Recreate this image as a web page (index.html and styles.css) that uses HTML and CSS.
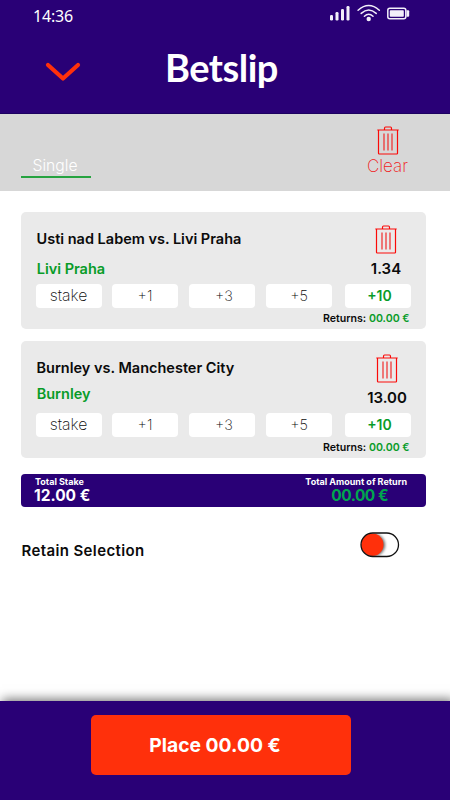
FILE: index.html
```html
<!DOCTYPE html>
<html lang="en">
<head>
<meta charset="utf-8">
<title>Betslip</title>
<link rel="stylesheet" href="styles.css">
</head>
<body>
<svg class="defs" aria-hidden="true">
  <symbol id="trash" viewBox="0 0 22 29">
    <path d="M7.500 3.500V2.500Q7.500 1 8.500 1H13.500Q14.500 1 14.500 2.500V3.500M.300 4H21.700M1.500 4V27.300Q1.500 28 2.300 28H19.700Q20.500 28 20.500 27.300V4" fill="none" stroke="#fb0a08" stroke-width="1.200"/>
    <path d="M7 7.500V24.500M11 7.500V24.500M15 7.500V24.500" fill="none" stroke="#f02a2a" stroke-width="1.200"/>
  </symbol>
</svg>
<div class="screen">
  <header class="header">
    <div class="status">
      <span class="time">14:36</span>
      <svg class="signals" viewBox="0 0 82 20" width="82" height="20">
        <g fill="#f2effa">
          <rect x="0" y="12" width="3" height="5.500" rx="1.200"/>
          <rect x="5.500" y="9" width="3" height="8.500" rx="1.200"/>
          <rect x="11" y="6" width="3" height="11.500" rx="1.200"/>
          <rect x="16.500" y="3" width="3" height="14.500" rx="1.200"/>
          <circle cx="38.700" cy="16" r="2.200"/>
          <rect x="59.800" y="7.300" width="14" height="6.400" rx=".8"/>
          <path d="M76.500 7.300h1.700q1 0 1 1v4.400q0 1-1 1h-1.700z"/>
        </g>
        <g fill="none" stroke="#f2effa" stroke-width="1.500" stroke-linecap="round">
          <path d="M28.100 7.200Q38.700-2.200 49.300 7.200M31.200 10.400Q38.700 3.600 46.200 10.400M34.400 13.200Q38.700 9.300 43 13.200"/>
          <rect x="57.800" y="5.300" width="18" height="10.400" rx="2"/>
        </g>
      </svg>
    </div>
    <div class="title-bar">
      <svg class="chevron" viewBox="0 0 36 20" width="36" height="20"><path d="M3 3L18 16.500L33 3" fill="none" stroke="#ff300b" stroke-width="4.200" stroke-linecap="round" stroke-linejoin="round"/></svg>
      <h1>Betslip</h1>
    </div>
  </header>

  <nav class="tabs">
    <span class="tab">Single</span>
    <div class="clear"><svg class="trash"><use href="#trash"/></svg><span>Clear</span></div>
  </nav>

  <main>
    <section class="card">
      <div class="info">
        <div class="match"><h2>Usti nad Labem vs. Livi Praha</h2><p class="pick">Livi Praha</p></div>
        <div class="side"><svg class="trash"><use href="#trash"/></svg><span class="odds">1.34</span></div>
      </div>
      <div class="stakes"><span class="stake">stake</span><span>+1</span><span>+3</span><span>+5</span><span class="active">+10</span></div>
      <p class="returns">Returns: <b>00.00 €</b></p>
    </section>

    <section class="card second">
      <div class="info">
        <div class="match"><h2>Burnley vs. Manchester City</h2><p class="pick">Burnley</p></div>
        <div class="side"><svg class="trash"><use href="#trash"/></svg><span class="odds">13.00</span></div>
      </div>
      <div class="stakes"><span class="stake">stake</span><span>+1</span><span>+3</span><span>+5</span><span class="active">+10</span></div>
      <p class="returns">Returns: <b>00.00 €</b></p>
    </section>

    <section class="totals">
      <div><small>Total Stake</small><strong>12.00 €</strong></div>
      <div class="total-return"><small>Total Amount of Return</small><strong>00.00 €</strong></div>
    </section>

    <div class="retain"><span>Retain Selection</span><svg class="toggle" viewBox="0 0 40 26" width="40" height="26">
      <defs>
        <clipPath id="track"><rect x="1" y="1" width="37.500" height="23.500" rx="11.750"/></clipPath>
        <filter id="soft"><feGaussianBlur stdDeviation="1.800"/></filter>
      </defs>
      <g clip-path="url(#track)">
        <circle cx="14" cy="13" r="11" fill="#000" opacity=".6" filter="url(#soft)"/>
        <circle cx="12.300" cy="12.750" r="11.200" fill="#ff300b"/>
      </g>
      <rect x="1" y="1" width="37.500" height="23.500" rx="11.750" fill="none" stroke="#101010" stroke-width="1.300"/>
    </svg></div>
  </main>

  <footer><button>Place 00.00 €</button></footer>
</div>
</body>
</html>
```
FILE: styles.css
```css
* { box-sizing: border-box; margin: 0; padding: 0; }
body { font-family: Inter, "Liberation Sans", sans-serif; color: #0b0b0b; background: #fff; }
.defs { display: none; }
.screen { width: 450px; height: 800px; display: flex; flex-direction: column; overflow: hidden; }
.trash { display: block; width: 22px; height: 29px; }

.header { height: 114px; background: #290076; color: #fff; border-bottom: 1px solid #1c0060; }
.status { height: 32px; padding: 3px 38px 0 33px; display: flex; justify-content: space-between; }
.time { font: 400 16px/26px "Noto Sans", sans-serif; letter-spacing: -0.2px; }
.title-bar { display: flex; align-items: flex-start; padding-left: 45px; }
.chevron { margin-top: 30px; }
h1 { margin-left: 84px; margin-top: 11px; font: 700 38px/48px Lato, sans-serif; letter-spacing: -0.5px; }

.tabs { height: 77px; background: #d7d7d7; display: flex; justify-content: space-between; padding: 0 40px 0 21px; font-weight: 200; }
.tab { width: 70px; height: 64px; padding: 41px 2px 0 0; border-bottom: 2px solid #26a340; text-align: center; line-height: 22px; font-size: 15.700px; font-weight: 300; color: #fff; }
.clear { width: 45px; padding-top: 12px; display: flex; flex-direction: column; align-items: center; font-size: 17px; line-height: 22px; color: #f02020; }

main { flex: 1; padding: 21px 24px 0 21px; }
.card { height: 117px; border-radius: 5px; background: #eaeaea; padding: 0 15px; }
.info { height: 72px; display: flex; justify-content: space-between; }
h2 { font-size: 14.500px; line-height: 20px; font-weight: 600; margin-top: 17px; padding-left: .5px; white-space: nowrap; }
.pick { font-size: 14.500px; line-height: 20px; font-weight: 600; color: #089c28; margin-top: 10px; padding-left: .7px; }
.side { width: 50px; display: flex; flex-direction: column; align-items: center; padding-top: 13px; }
.odds { font-size: 15px; line-height: 20px; font-weight: 600; margin-top: 5px; }
.second { margin-top: 12px; }
.second .pick { margin-top: 6px; }
.second .side { transform: translateX(1px); }
.stakes { display: grid; grid-template-columns: 76px 77px 77px 79px 66px; height: 24px; }
.stakes span { width: 66px; background: #fff; border-radius: 4px; text-align: center; font-size: 14.500px; line-height: 24px; font-weight: 200; }
.stakes span:nth-child(3) { padding-left: 4px; }
.stakes .stake { font-size: 15.800px; line-height: 23px; padding-right: 1px; }
.stakes .active { font-weight: 600; font-size: 14px; color: #089c28; padding-left: 3px; }
.returns { text-align: right; font-size: 10.600px; line-height: 17px; font-weight: 600; margin-top: 2px; padding-right: 1.500px; }
.returns b { font-weight: 600; color: #089c28; }

.totals { margin-top: 16px; height: 33px; background: #290076; color: #fff; border-radius: 4px; padding: 3px 19px 0 14px; display: flex; justify-content: space-between; }
.totals small { display: block; font-size: 9px; line-height: 10px; font-weight: 700; }
.totals strong { display: block; font-size: 15.500px; line-height: 18px; font-weight: 700; margin-left: -1px; }
.total-return { text-align: center; }
.totals .total-return strong { color: #00a64f; letter-spacing: -0.5px; margin-left: 7px; }

.retain { margin-top: 24px; padding: 0 26px 0 .5px; height: 40px; display: flex; justify-content: space-between; font-size: 15px; font-weight: 600; letter-spacing: .38px; line-height: 39px; }
.toggle { margin-top: 1px; }

footer { height: 99px; background: #290076; box-shadow: 3px -1px 10px 1px #0008; display: flex; justify-content: center; padding: 14px 8px 0 0; }
button { width: 260px; height: 60px; border: 0; border-radius: 5px; background: #ff300b; color: #fff; font: 700 19.300px/60px Inter, sans-serif; padding-right: 12px; }
```
